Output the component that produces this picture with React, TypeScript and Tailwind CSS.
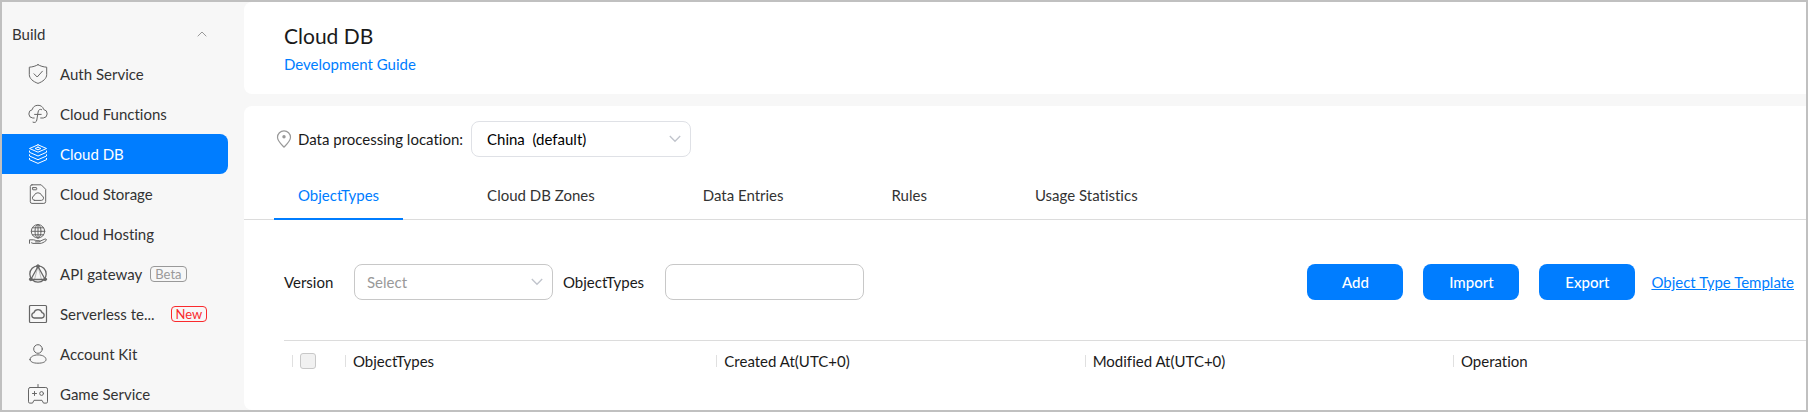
import type { ReactNode } from "react";

function Icon({ children }: { children: ReactNode }) {
  return (
    <svg
      width="20"
      height="20"
      viewBox="0 0 20 20"
      fill="none"
      stroke="currentColor"
      strokeWidth="1"
      strokeLinecap="round"
      strokeLinejoin="round"
      className="shrink-0"
      aria-hidden="true"
    >
      {children}
    </svg>
  );
}

const icons = {
  shield: (
    <Icon>
      <path d="M10 .7C7.8 2 4.6 3 1.3 3.2v7.3c0 4 3.6 7 8.7 8.9 5.1-1.9 8.7-4.9 8.7-8.9V3.2C15.4 3 12.2 2 10 .7Z" />
      <path d="m6 9.8 3.2 3.2 5.2-5.8" />
    </Icon>
  ),
  functions: (
    <Icon>
      <path d="M6.2 14H4.7A4.2 4.2 0 0 1 4.2 5.7 6 6 0 0 1 15.7 5.5 4.3 4.3 0 0 1 15.3 14h-2.6" />
      <path d="M13.6 5.6c-2-.8-3.1.2-3.5 2.4l-1.3 8c-.4 2.2-1.9 3-3.8 2.2M6.6 10.4h6.6" />
    </Icon>
  ),
  layers: (
    <Icon>
      <path d="M10 .8 18.5 4.500 10 8.200 1.500 4.500 10 .8Z" />
      <path d="M10 3.200 13 4.500 10 5.800 7 4.500 10 3.200Z" />
      <path d="M1.500 7v1.300L10 12l8.500-3.700V7" />
      <path d="M1.500 10.700V12L10 15.700l8.500-3.700v-1.300" />
      <path d="M1.500 14.400v1.300L10 19.400l8.500-3.700v-1.300" />
    </Icon>
  ),
  storage: (
    <Icon>
      <path d="M4 .8h9.2l4.500 4.500v12.200a1.900 1.900 0 0 1-1.900 1.900H4a1.700 1.700 0 0 1-1.700-1.700V2.500A1.700 1.700 0 0 1 4 .8Z" />
      <rect x="4.500" y="3.600" width="4.200" height="2.200" rx=".5" />
      <path d="M6.600 16.400a2.400 2.400 0 0 1-.5-4.700 4 4 0 0 1 7.700 0 2.400 2.400 0 0 1-.4 4.700H6.600Z" />
    </Icon>
  ),
  hosting: (
    <Icon>
      <circle cx="10" cy="7.300" r="6.700" />
      <ellipse cx="10" cy="7.300" rx="3" ry="6.700" />
      <path d="M10 .6V14M3.300 7.300h13.400M4.500 3.800h11M4.500 10.800h11" />
      <path d="M1.500 19.300v-3.500h4c1.500 0 2 .9 3.400.9h2.200c1.300 0 1.300 1.200 0 1.200H7.500M11.900 17.200l5-2.100c1.400-.5 2.200.7 1.100 1.500-2 1.600-3.800 2.800-6 2.800H5l-1.500-.6" />
    </Icon>
  ),
  gateway: (
    <Icon>
      <circle cx="10" cy="10" r="8.200" strokeWidth="1.300" />
      <path d="M10 2.500 2.800 15.500h14.400L10 2.500Z" strokeWidth="1.300" />
      <path d="M10 2.500 6.500 15.500M10 2.500l3.500 13" strokeWidth=".4" />
      <circle cx="10" cy="2.300" r="1.500" fill="currentColor" />
      <circle cx="2.800" cy="15.300" r="1.400" fill="currentColor" />
      <circle cx="17.200" cy="15.300" r="1.400" fill="currentColor" />
    </Icon>
  ),
  serverless: (
    <Icon>
      <rect x="1.500" y="1.500" width="17" height="17" rx="1" strokeWidth="1.200" />
      <path d="M6.200 14a2.700 2.700 0 0 1-.3-5.300 4.300 4.300 0 0 1 8.200 0A2.700 2.700 0 0 1 13.800 14H6.200Z" strokeWidth="1.300" />
    </Icon>
  ),
  account: (
    <Icon>
      <circle cx="10" cy="5" r="4.300" />
      <path d="M2 15.500c0-2.600 3.500-4.600 8-4.600s8 2 8 4.600c0 2.400-3.200 3.700-8 3.700s-8-1.300-8-3.700Z" />
    </Icon>
  ),
  game: (
    <Icon>
      <path d="M10 .5v3M2.200 3.500h15.600a1.700 1.700 0 0 1 1.700 1.700v12.600a1.300 1.300 0 0 1-1.300 1.300h-2.700L14 16.300H6l-1.500 2.800H1.800a1.300 1.300 0 0 1-1.300-1.300V5.200a1.700 1.700 0 0 1 1.700-1.700Z" />
      <path d="M6.500 7.500v4M4.500 9.500h4" />
      <circle cx="13.600" cy="9.500" r="1.900" />
    </Icon>
  ),
};

type Item = { label: string; icon: ReactNode; active?: boolean; tag?: "Beta" | "New" };

const items: Item[] = [
  { label: "Auth Service", icon: icons.shield },
  { label: "Cloud Functions", icon: icons.functions },
  { label: "Cloud DB", icon: icons.layers, active: true },
  { label: "Cloud Storage", icon: icons.storage },
  { label: "Cloud Hosting", icon: icons.hosting },
  { label: "API gateway", icon: icons.gateway, tag: "Beta" },
  { label: "Serverless te...", icon: icons.serverless, tag: "New" },
  { label: "Account Kit", icon: icons.account },
  { label: "Game Service", icon: icons.game },
];

const tabs = ["ObjectTypes", "Cloud DB Zones", "Data Entries", "Rules", "Usage Statistics"];

const columns = [
  { name: "ObjectTypes", width: "w-[24.4%]" },
  { name: "Created At(UTC+0)", width: "w-[24.2%]" },
  { name: "Modified At(UTC+0)", width: "w-[24.2%]" },
  { name: "Operation", width: "w-auto" },
];

function Chevron() {
  return (
    <svg
      width="12"
      height="8"
      viewBox="0 0 12 8"
      fill="none"
      stroke="#c0c4cc"
      strokeWidth="1.300"
      className="pointer-events-none absolute top-1/2 right-[10px] -translate-y-1/2"
      aria-hidden="true"
    >
      <path d="m.8 1 5.200 5.300L11.200 1" />
    </svg>
  );
}

function Sidebar() {
  return (
    <nav className="w-[242px] shrink-0 pt-3 pr-4">
      <button type="button" className="flex h-10 w-full items-center justify-between pr-[21px] pl-[10px] text-[#333]">
        Build
        <svg width="10" height="6" viewBox="0 0 10 6" fill="none" stroke="#999" aria-hidden="true">
          <path d="m.7 5.300 4.300-4.300 4.300 4.300" />
        </svg>
      </button>
      <ul>
        {items.map((item) => (
          <li key={item.label}>
            <a
              href="#"
              aria-current={item.active ? "page" : undefined}
              className={
                item.active
                  ? "flex h-10 items-center rounded-r-lg bg-[#007dff] pl-[26px] text-white"
                  : "flex h-10 items-center pl-[26px] text-[#666]"
              }
            >
              {item.icon}
              <span className={item.active ? "ml-3" : "ml-3 text-[#333]"}>{item.label}</span>
              {item.tag === "Beta" && (
                <span className="ml-2 rounded border border-[#999] px-1 text-[13px] leading-[14px] text-[#999]">Beta</span>
              )}
              {item.tag === "New" && (
                <span className="ml-4 rounded border border-[#fa2a2d] px-1 text-[13px] leading-[14px] text-[#fa2a2d]">New</span>
              )}
            </a>
          </li>
        ))}
      </ul>
    </nav>
  );
}

export default function App() {
  return (
    <div className="flex h-screen overflow-hidden border-2 border-[#c0c0c0] bg-[#f7f7f7] font-['Lato',sans-serif] text-[15px] leading-5 text-[#1a1a1a] [font-variant-ligatures:none]">
      <Sidebar />
      <div className="flex min-w-0 flex-1 flex-col gap-3">
        <header className="rounded-l-lg bg-white pt-5 pb-5 pl-10">
          <h1 className="text-[21px] leading-7">Cloud DB</h1>
          <a href="#" className="mt-1 block text-[#007dff]">
            Development Guide
          </a>
        </header>

        <main className="flex-1 rounded-l-lg bg-white">
          <div className="flex items-center pt-[15px] pl-8">
            <svg width="16" height="18" viewBox="0 0 16 18" fill="none" stroke="#999" strokeWidth="1.200" aria-hidden="true">
              <path d="M8 .8a6.500 6.500 0 0 0-6.500 6.500C1.500 11 5.500 14.600 8 17.200c2.500-2.600 6.500-6.200 6.500-9.900A6.500 6.500 0 0 0 8 .8Z" />
              <circle cx="8" cy="6.700" r="1.700" fill="#999" stroke="none" />
            </svg>
            <label htmlFor="location" className="ml-1.5 w-[173px] whitespace-nowrap">
              Data processing location:
            </label>
            <div className="relative">
              <select
                id="location"
                className="block h-9 w-[220px] appearance-none rounded-lg border border-[#dfe1e6] bg-white pl-[15px] text-black"
              >
                <option>China{"\u00a0\u00a0"}(default)</option>
              </select>
              <Chevron />
            </div>
          </div>

          <div role="tablist" className="mt-[14px] flex gap-[60px] border-b border-[#dcdcdc] pl-[30px]">
            {tabs.map((tab, i) => (
              <button
                key={tab}
                type="button"
                role="tab"
                aria-selected={i === 0}
                className={
                  i === 0
                    ? "-mb-px h-[49px] border-b-2 border-[#007dff] px-6 text-[#007dff]"
                    : "h-12 px-6 text-[#333]"
                }
              >
                {tab}
              </button>
            ))}
          </div>

          <div className="mt-11 flex items-center pr-3 pl-10">
            <label htmlFor="version" className="w-[70px]">
              Version
            </label>
            <div className="relative">
              <select
                id="version"
                className="block h-9 w-[199px] appearance-none rounded-lg border border-[#c8c8c8] bg-white pl-3 text-[#999]"
              >
                <option>Select</option>
              </select>
              <Chevron />
            </div>
            <label htmlFor="object-type" className="ml-[10px] w-[102px]">
              ObjectTypes
            </label>
            <input
              id="object-type"
              type="text"
              className="h-9 w-[199px] rounded-lg border border-[#c8c8c8] bg-white px-3"
            />
            <div className="ml-auto flex items-center gap-5">
              {["Add", "Import", "Export"].map((name) => (
                <button key={name} type="button" className="h-9 w-24 rounded-lg bg-[#007dff] font-medium text-white">
                  {name}
                </button>
              ))}
            </div>
            <a href="#" className="ml-4 text-[#007dff] underline">
              Object Type Template
            </a>
          </div>

          <div className="mt-10 pl-10">
            <table className="w-full table-fixed border-t border-[#dcdcdc] text-left">
              <thead>
                <tr className="h-10">
                  <th className="w-[61px] pl-2 font-normal">
                    <div className="flex h-3 items-center border-l border-[#e0e0e0] pl-[7px]">
                      <input
                        type="checkbox"
                        aria-label="Select all object types"
                        className="size-4 appearance-none rounded-[3px] border border-[#c8c8c8] bg-[#f1f1f1]"
                      />
                    </div>
                  </th>
                  {columns.map(({ name, width }) => (
                    <th key={name} className={`font-normal ${width}`}>
                      <div className="flex h-3 items-center border-l border-[#e0e0e0] pl-[7px]">{name}</div>
                    </th>
                  ))}
                </tr>
              </thead>
            </table>
          </div>
        </main>
      </div>
    </div>
  );
}
